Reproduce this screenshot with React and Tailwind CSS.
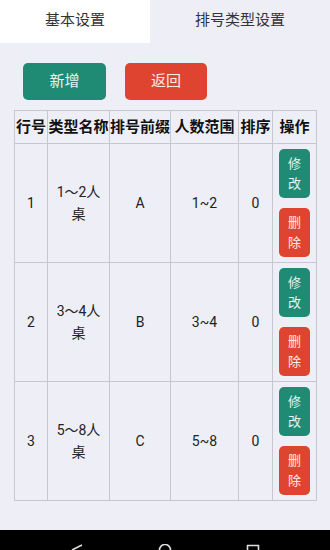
const rows = [
  { id: 1, name: ['1〜2人', '桌'], prefix: 'A', range: '1~2', sort: 0 },
  { id: 2, name: ['3〜4人', '桌'], prefix: 'B', range: '3~4', sort: 0 },
  { id: 3, name: ['5〜8人', '桌'], prefix: 'C', range: '5~8', sort: 0 },
]

const headers = ['行号', '类型名称', '排号前缀', '人数范围', '排序', '操作']

function ActionButton({ color, chars }) {
  return (
    <button
      type="button"
      className={`flex h-[49px] w-[31px] flex-col items-center justify-center rounded-[5px] text-[13px] leading-[20px] text-white/90 ${color}`}
    >
      {chars.map((c) => (
        <span key={c}>{c}</span>
      ))}
    </button>
  )
}

function Cell({ children }) {
  return (
    <td className="border border-[#c6c7d1] p-0 text-center align-middle text-[14px] leading-[22px] text-[#222]">
      {children}
    </td>
  )
}

export default function App() {
  return (
    <div
      className="flex h-[550px] w-[330px] flex-col bg-[#eeeff6]"
      style={{ fontFamily: 'Roboto, "Noto Sans CJK SC", sans-serif' }}
    >
      <div className="flex h-[43px]">
        <div className="flex w-[150px] items-center justify-center bg-white pb-[3px] text-[15px] text-[#333]">基本设置</div>
        <div className="flex flex-1 items-center justify-center pb-[3px] text-[15px] text-[#333]">排号类型设置</div>
      </div>

      <div className="flex gap-[19px] pl-[23px] pt-[20px]">
        <button type="button" className="h-[37px] w-[83px] rounded-[5px] bg-[#1f8b75] text-[15px] text-white/90">
          新增
        </button>
        <button type="button" className="h-[37px] w-[82px] rounded-[5px] bg-[#de4430] text-[15px] text-white/90">
          返回
        </button>
      </div>

      <div className="pl-[14px] pt-[10px]">
        <table className="table-fixed border-collapse" style={{ width: 302 }}>
          <colgroup>
            <col className="w-[33px]" />
            <col className="w-[62px]" />
            <col className="w-[61px]" />
            <col className="w-[68px]" />
            <col className="w-[34px]" />
            <col className="w-[44px]" />
          </colgroup>
          <thead>
            <tr className="h-[33px]">
              {headers.map((h) => (
                <th
                  key={h}
                  className="whitespace-nowrap border border-[#c6c7d1] p-0 text-center text-[15px] font-bold text-[#111]"
                >
                  {h}
                </th>
              ))}
            </tr>
          </thead>
          <tbody>
            {rows.map((row) => (
              <tr key={row.id} className="h-[119px]">
                <Cell>{row.id}</Cell>
                <Cell>
                  <div>{row.name[0]}</div>
                  <div>{row.name[1]}</div>
                </Cell>
                <Cell>{row.prefix}</Cell>
                <Cell>{row.range}</Cell>
                <Cell>{row.sort}</Cell>
                <td className="border border-[#c6c7d1] p-0 align-middle">
                  <div className="flex flex-col items-center gap-[10px]">
                    <ActionButton color="bg-[#1f8b75]" chars={['修', '改']} />
                    <ActionButton color="bg-[#de4430]" chars={['删', '除']} />
                  </div>
                </td>
              </tr>
            ))}
          </tbody>
        </table>
      </div>

      <div className="mt-auto flex h-[20px] items-end justify-between bg-black px-[70px]">
        <svg width="14" height="6" viewBox="0 0 14 6">
          <path d="M12 1 L2 6" stroke="#ddd" strokeWidth="1.6" fill="none" />
        </svg>
        <svg width="14" height="6" viewBox="0 0 14 6">
          <path d="M1.5 6 A5.5 5.5 0 0 1 12.5 6" stroke="#ddd" strokeWidth="1.6" fill="none" />
        </svg>
        <svg width="14" height="6" viewBox="0 0 14 6">
          <path d="M1.5 6 V1.5 H12.5 V6" stroke="#ddd" strokeWidth="1.6" fill="none" />
        </svg>
      </div>
    </div>
  )
}
